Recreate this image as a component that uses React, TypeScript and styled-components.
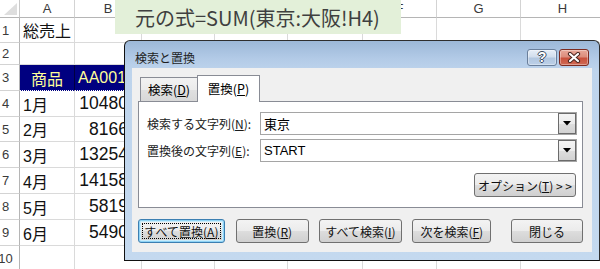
import React from "react";
import styled, { createGlobalStyle, css } from "styled-components";

const Global = createGlobalStyle`
  html, body { margin: 0; padding: 0; background: #fff; }
  body { width: 600px; height: 269px; overflow: hidden; }
`;

const UI_FONT = `"Noto Sans CJK JP", "Noto Sans", sans-serif`;
const CELL_FONT = `"Liberation Sans", "Noto Sans CJK JP", sans-serif`;

const Page = styled.div`
  position: relative;
  width: 600px;
  height: 269px;
  overflow: hidden;
  background: #fff;
`;

/* ---------- spreadsheet ---------- */
const Sheet = styled.div`
  display: grid;
  grid-template-columns: 20px 55px 67px 73px 73px 75px 74px 84px 84px;
  grid-template-rows: 18px 25px 22px 26px 26px 25px 26px 26px 26px 26px 26px;
`;

const Corner = styled.div`
  box-sizing: border-box;
  border-right: 1px solid #c9c9c9;
  border-bottom: 1px solid #b5b5b5;
  display: flex;
  align-items: flex-end;
  justify-content: flex-end;
  padding: 0 2px 2px 0;
`;

const ColHeader = styled.div`
  box-sizing: border-box;
  border-right: 1px solid #d3d3d3;
  border-bottom: 1px solid #b5b5b5;
  display: flex;
  align-items: center;
  justify-content: center;
  font-family: "Liberation Sans", sans-serif;
  font-size: 13px;
  color: #3a3a3a;
`;

const RowHeader = styled.div`
  box-sizing: border-box;
  border-right: 1px solid #b5b5b5;
  border-bottom: 1px solid #d3d3d3;
  display: flex;
  align-items: center;
  justify-content: center;
  padding-right: 8px;
  font-family: "Liberation Sans", sans-serif;
  font-size: 13px;
  color: #3a3a3a;
`;

const Cell = styled.div<{ $align?: "left" | "center" | "right"; $fill?: boolean; $num?: boolean }>`
  box-sizing: border-box;
  border-right: 1px solid #dadada;
  border-bottom: 1px solid #dadada;
  display: flex;
  align-items: center;
  white-space: nowrap;
  overflow: hidden;
  font-family: ${CELL_FONT};
  font-size: ${(p) => (p.$num ? "17.5px" : "16px")};
  color: #111;
  padding: 0 3px;
  justify-content: ${(p) =>
    p.$align === "center" ? "center" : p.$align === "right" ? "flex-end" : "flex-start"};
  ${(p) => p.$num && css`padding-right: 13px;`}
  ${(p) =>
    p.$fill &&
    css`
      background: #000080;
      color: #ffff99;
      border-right-color: #000040;
      border-bottom: 1px dotted #ffffff;
    `}
`;

/* ---------- banner ---------- */
const Banner = styled.div`
  position: absolute;
  left: 115px;
  top: 0;
  width: 286px;
  height: 34px;
  background: #e3f0d9;
  display: flex;
  align-items: center;
  padding-left: 20px;
  box-sizing: border-box;
  font-family: "Noto Sans CJK JP", sans-serif;
  font-size: 20px;
  color: #3f3f3f;
  white-space: nowrap;
`;

/* ---------- dialog ---------- */
const Dialog = styled.div`
  position: absolute;
  left: 124px;
  top: 40px;
  width: 476px;
  height: 221px;
  box-sizing: border-box;
  border: 1px solid #2e2e2e;
  border-left-color: #111;
  border-bottom-color: #111;
  border-radius: 6px 6px 0 0;
  background: linear-gradient(to bottom, #9cb8d8 0px, #b3cbe7 18px, #bed4ec 30px, #c4d9ef 100%);
  display: flex;
  flex-direction: column;
  padding: 0 7px 8px 7px;
  font-family: ${UI_FONT};
  font-size: 12px;
  color: #000;
`;

const TitleBar = styled.div`
  height: 27px;
  box-sizing: border-box;
  padding: 5px 3px 0 3px;
  display: flex;
  align-items: center;
  justify-content: space-between;
`;

const Title = styled.span`
  font-size: 12px;
  color: #1e1e1e;
`;

const Caption = styled.div`
  display: flex;
  gap: 2px;
`;

const CapButton = styled.div<{ $close?: boolean }>`
  width: 30px;
  height: 17px;
  box-sizing: border-box;
  border-radius: 3px;
  display: flex;
  align-items: center;
  justify-content: center;
  border: 1px solid ${(p) => (p.$close ? "#7d2b20" : "#6a7f9b")};
  background: ${(p) =>
    p.$close
      ? "linear-gradient(to bottom, #e8a899 0%, #dc8d7c 45%, #c9513c 55%, #cf6a55 100%)"
      : "linear-gradient(to bottom, #e6eef8 0%, #d2deed 45%, #b2c7e0 55%, #bcd0e8 100%)"};
  box-shadow: inset 0 0 0 1px rgba(255, 255, 255, 0.35);
`;

const HelpGlyph = styled.span`
  font-family: "Liberation Sans", sans-serif;
  font-weight: bold;
  font-size: 14px;
  line-height: 1;
  color: #fff;
  text-shadow: -1px 0 #3c4b5e, 1px 0 #3c4b5e, 0 -1px #3c4b5e, 0 1px #3c4b5e;
`;

const Client = styled.div`
  flex: 1;
  background: #f0f0f0;
  display: flex;
  flex-direction: column;
  padding: 7px 9px 9px 6px;
`;

const TabStrip = styled.div`
  display: flex;
  align-items: flex-end;
  height: 26px;
  padding-left: 2px;
  position: relative;
  z-index: 1;
`;

const Tab = styled.div<{ $active?: boolean }>`
  box-sizing: border-box;
  display: flex;
  align-items: center;
  justify-content: center;
  border: 1px solid #898c95;
  border-bottom: none;
  font-size: 12.5px;
  ${(p) =>
    p.$active
      ? css`
          width: 63px;
          height: 27px;
          margin-bottom: -1px;
          background: #fff;
          padding-bottom: 2px;
        `
      : css`
          width: 57px;
          height: 24px;
          border-right: none;
          background: linear-gradient(to bottom, #f2f2f2 0%, #ebebeb 50%, #e0e0e0 51%, #d8d8d8 100%);
        `}
`;

const Panel = styled.div`
  height: 107px;
  box-sizing: border-box;
  border: 1px solid #898c95;
  background: #fff;
  padding: 10px 6px 0 8px;
  display: flex;
  flex-direction: column;
`;

const Fields = styled.div`
  display: grid;
  grid-template-columns: 113px 317px;
  grid-auto-rows: 23px;
  row-gap: 4px;
  align-items: center;
`;

const Label = styled.span`
  font-size: 12px;
  color: #1a1a1a;
  white-space: nowrap;
`;

const Combo = styled.div`
  height: 23px;
  box-sizing: border-box;
  border: 1px solid #a5a5a5;
  display: flex;
  align-items: stretch;
  background: #fff;
`;

const ComboText = styled.span`
  flex: 1;
  display: flex;
  align-items: center;
  padding-left: 3px;
  font-family: "Liberation Sans", "Noto Sans CJK JP", sans-serif;
  font-size: 13px;
  color: #000;
`;

const DropButton = styled.div`
  width: 18px;
  box-sizing: border-box;
  border: 1px solid #6b6b6b;
  background: linear-gradient(to bottom, #f4f4f4 0%, #ececec 50%, #dedede 51%, #d2d2d2 100%);
  display: flex;
  align-items: center;
  justify-content: center;
`;

const OptionRow = styled.div`
  margin-top: 11px;
  display: flex;
  justify-content: flex-end;
`;

const ButtonRow = styled.div`
  margin-top: 11px;
  display: flex;
`;

const Button = styled.div<{ $w: number; $ml?: number; $focus?: boolean }>`
  position: relative;
  width: ${(p) => p.$w}px;
  height: 24px;
  margin-left: ${(p) => p.$ml ?? 0}px;
  box-sizing: border-box;
  border: 1px solid #707070;
  border-radius: 3px;
  background: linear-gradient(to bottom, #f3f3f3 0%, #ebebeb 50%, #dddddd 51%, #d0d0d0 100%);
  display: flex;
  align-items: center;
  justify-content: center;
  font-size: 12px;
  color: #111;
  white-space: nowrap;
  ${(p) =>
    p.$focus &&
    css`
      border-color: #3c7fb1;
      box-shadow: inset 0 0 0 1px #8fd3f5, inset 0 0 0 2px #c8ecfb;
      &::after {
        content: "";
        position: absolute;
        inset: 3px;
        border: 1px dotted #000;
        border-radius: 1px;
      }
    `}
`;

const U = styled.span`
  text-decoration: underline;
  text-underline-offset: 1px;
`;

const CornerTriangle = () => (
  <svg width="13" height="12" viewBox="0 0 13 12">
    <polygon points="13,0 13,12 0,12" fill="#dedede" />
  </svg>
);

const CloseIcon = () => (
  <svg width="14" height="11" viewBox="0 0 14 11">
    <path d="M3 2 L11 9 M11 2 L3 9" stroke="#4a2620" strokeWidth="4.2" strokeLinecap="round" />
    <path d="M3 2 L11 9 M11 2 L3 9" stroke="#ffffff" strokeWidth="2.2" strokeLinecap="round" />
  </svg>
);

const Arrow = () => (
  <svg width="8" height="5" viewBox="0 0 8 5">
    <polygon points="0,0 8,0 4,4.5" fill="#000" />
  </svg>
);

const cols = ["A", "B", "C", "D", "E", "F", "G", "H"];
const months = ["1月", "2月", "3月", "4月", "5月", "6月"];
const values = [10480, 8166, 13254, 14158, 5819, 5490];

type RowDef = { a?: string; b?: string; fill?: boolean; num?: boolean };

const rows: RowDef[] = [
  { a: "総売上" },
  {},
  { a: "商品", b: "AA001", fill: true },
  ...months.map((m, i) => ({ a: m, b: String(values[i]), num: true })),
  {},
];

export default function App() {
  return (
    <Page>
      <Global />
      <Sheet>
        <Corner>
          <CornerTriangle />
        </Corner>
        {cols.map((c) => (
          <ColHeader key={c}>{c}</ColHeader>
        ))}
        {rows.map((r, ri) => (
          <React.Fragment key={ri}>
            <RowHeader>{ri + 1}</RowHeader>
            <Cell $fill={r.fill} $align={r.fill ? "center" : "left"}>
              {r.a}
            </Cell>
            <Cell $fill={r.fill} $num={r.num} $align={r.num ? "right" : "left"}>
              {r.b}
            </Cell>
            {cols.slice(2).map((c) => (
              <Cell key={c} />
            ))}
          </React.Fragment>
        ))}
      </Sheet>

      <Banner>元の式=SUM(東京:大阪!H4)</Banner>

      <Dialog>
        <TitleBar>
          <Title>検索と置換</Title>
          <Caption>
            <CapButton>
              <HelpGlyph>?</HelpGlyph>
            </CapButton>
            <CapButton $close>
              <CloseIcon />
            </CapButton>
          </Caption>
        </TitleBar>
        <Client>
          <TabStrip>
            <Tab>
              検索(<U>D</U>)
            </Tab>
            <Tab $active>
              置換(<U>P</U>)
            </Tab>
          </TabStrip>
          <Panel>
            <Fields>
              <Label>
                検索する文字列(<U>N</U>):
              </Label>
              <Combo>
                <ComboText>東京</ComboText>
                <DropButton>
                  <Arrow />
                </DropButton>
              </Combo>
              <Label>
                置換後の文字列(<U>E</U>):
              </Label>
              <Combo>
                <ComboText>START</ComboText>
                <DropButton>
                  <Arrow />
                </DropButton>
              </Combo>
            </Fields>
            <OptionRow>
              <Button $w={102}>
                オプション(<U>T</U>)&nbsp;&gt; &gt;
              </Button>
            </OptionRow>
          </Panel>
          <ButtonRow>
            <Button $w={87} $focus>
              すべて置換(<U>A</U>)
            </Button>
            <Button $w={73} $ml={11}>
              置換(<U>R</U>)
            </Button>
            <Button $w={84} $ml={10}>
              すべて検索(<U>I</U>)
            </Button>
            <Button $w={79} $ml={10}>
              次を検索(<U>F</U>)
            </Button>
            <Button $w={72} $ml={20}>
              閉じる
            </Button>
          </ButtonRow>
        </Client>
      </Dialog>
    </Page>
  );
}
